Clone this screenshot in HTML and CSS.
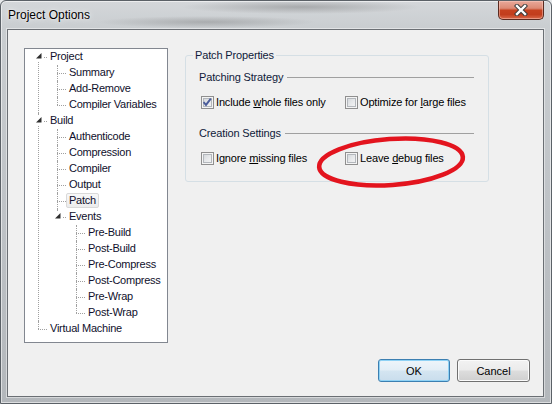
FILE: index.html
```html
<!DOCTYPE html>
<html>
<head>
<meta charset="utf-8">
<title>Project Options</title>
<link rel="stylesheet" href="styles.css">
</head>
<body>
<div class="window">
  <div class="titlebar">
    <span class="title">Project Options</span>
    <button class="close" aria-label="Close"><svg width="14" height="12" viewBox="0 0 14 12"><path d="M3 2 L11 10 M11 2 L3 10" stroke="#3b3b3b" stroke-width="4.4" stroke-linecap="square"/><path d="M3 2 L11 10 M11 2 L3 10" stroke="#ffffff" stroke-width="2.4" stroke-linecap="square"/></svg></button>
  </div>
  <div class="client">
    <div class="main">
      <div class="tree">
        <ul class="lvl0">
          <li class="first">
            <div class="row"><svg class="tw" width="9" height="9" viewBox="0 0 9 9"><rect width="9" height="9" fill="#fff"/><polygon points="7.5,1 7.5,6.5 2,6.5" fill="#2e2e2e"/></svg><span class="lbl">Project</span></div>
            <ul class="lvl1">
              <li><div class="row"><span class="lbl">Summary</span></div></li>
              <li><div class="row"><span class="lbl">Add-Remove</span></div></li>
              <li class="last"><div class="row"><span class="lbl">Compiler Variables</span></div></li>
            </ul>
          </li>
          <li>
            <div class="row"><svg class="tw" width="9" height="9" viewBox="0 0 9 9"><rect width="9" height="9" fill="#fff"/><polygon points="7.5,1 7.5,6.5 2,6.5" fill="#2e2e2e"/></svg><span class="lbl">Build</span></div>
            <ul class="lvl1">
              <li><div class="row"><span class="lbl">Authenticode</span></div></li>
              <li><div class="row"><span class="lbl">Compression</span></div></li>
              <li><div class="row"><span class="lbl">Compiler</span></div></li>
              <li><div class="row"><span class="lbl">Output</span></div></li>
              <li><div class="row"><span class="lbl selected">Patch</span></div></li>
              <li class="last">
                <div class="row"><svg class="tw" width="9" height="9" viewBox="0 0 9 9"><rect width="9" height="9" fill="#fff"/><polygon points="7.5,1 7.5,6.5 2,6.5" fill="#2e2e2e"/></svg><span class="lbl">Events</span></div>
                <ul class="lvl2">
                  <li><div class="row"><span class="lbl">Pre-Build</span></div></li>
                  <li><div class="row"><span class="lbl">Post-Build</span></div></li>
                  <li><div class="row"><span class="lbl">Pre-Compress</span></div></li>
                  <li><div class="row"><span class="lbl">Post-Compress</span></div></li>
                  <li><div class="row"><span class="lbl">Pre-Wrap</span></div></li>
                  <li class="last"><div class="row"><span class="lbl">Post-Wrap</span></div></li>
                </ul>
              </li>
            </ul>
          </li>
          <li class="last"><div class="row"><span class="lbl">Virtual Machine</span></div></li>
        </ul>
      </div>
      <div class="panel">
        <fieldset class="group">
          <legend>Patch Properties</legend>
          <div class="heading">Patching Strategy</div>
          <div class="checks">
            <label class="check"><span class="cb"><svg width="11" height="11" viewBox="0 0 11 11"><path d="M1.6 5.2 L4 7.9 L8.8 1.6" fill="none" stroke="#4a5c9a" stroke-width="1.9"/></svg></span><span class="txt">Include <u>w</u>hole files only</span></label>
            <label class="check"><span class="cb"></span><span class="txt">Optimize for <u>l</u>arge files</span></label>
          </div>
          <div class="heading second">Creation Settings</div>
          <div class="checks">
            <label class="check"><span class="cb"></span><span class="txt">Ignore <u>m</u>issing files</span></label>
            <label class="check"><span class="cb"></span><span class="txt">Leave <u>d</u>ebug files</span></label>
          </div>
        </fieldset>
        <svg class="ring" width="180" height="66" viewBox="0 0 180 66"><ellipse cx="91" cy="32" rx="72" ry="23" fill="none" stroke="#e3141e" stroke-width="4.6" transform="rotate(-4 91 32)"/></svg>
      </div>
    </div>
    <div class="buttons">
      <button class="btn default">OK</button>
      <button class="btn cancel">Cancel</button>
    </div>
  </div>
</div>
</body>
</html>
```

FILE: styles.css
```css
html, body {
  margin: 0;
  padding: 0;
}
body {
  width: 552px;
  height: 404px;
  background: #e6e8ea;
  font-family: "Liberation Sans", Arial, sans-serif;
  font-size: 11px;
  overflow: hidden;
}
.window {
  width: 552px;
  height: 404px;
  box-sizing: border-box;
  border: 1px solid #5b6167;
  border-radius: 6px 6px 0 0;
  padding: 0 7px 6px 6px;
  display: flex;
  flex-direction: column;
  background:
    radial-gradient(ellipse 120px 7px at 300px 6px, rgba(80,80,80,0.32), rgba(80,80,80,0) 100%),
    radial-gradient(ellipse 110px 6px at 205px 21px, rgba(80,80,80,0.28), rgba(80,80,80,0) 100%),
    linear-gradient(180deg, #d4d7da 0px, #c9cdd0 28px, #bfc3c7 200px, #b3b7bb 404px);
  box-shadow: inset 0 0 0 1px rgba(255,255,255,0.55);
}
.titlebar {
  height: 28px;
  display: flex;
  justify-content: space-between;
  align-items: flex-start;
}
.title {
  margin: 7px 0 0 1px;
  font-size: 12px;
  line-height: 15px;
  color: #000;
  text-shadow: 0 0 6px rgba(255,255,255,0.9), 0 0 2px rgba(255,255,255,0.8);
}
.close {
  width: 46px;
  height: 19px;
  margin: 0;
  padding: 0;
  box-sizing: border-box;
  border: 1px solid #5a2a20;
  border-top: none;
  border-radius: 0 0 5px 5px;
  background: linear-gradient(180deg, #e9a99a 0%, #dd8a75 40%, #c6411f 52%, #c23d1d 75%, #d9694a 100%);
  box-shadow: inset 0 0 0 1px rgba(255,210,200,0.45);
  display: flex;
  align-items: center;
  justify-content: center;
}
.client {
  flex: 1;
  border: 1px solid #6b6f74;
  background: #f0f0f0;
  display: flex;
  flex-direction: column;
  padding: 18px 13px 14px 16px;
  box-shadow: 0 0 0 1px rgba(255,255,255,0.45);
}
.main {
  display: flex;
  align-items: flex-start;
}
.tree {
  width: 144px;
  height: 295px;
  box-sizing: border-box;
  border: 1px solid #828790;
  background: #fff;
  color: #10102c;
  letter-spacing: -0.25px;
  overflow: hidden;
}
.tree ul {
  list-style: none;
  margin: 0;
  padding: 0;
}
.tree li {
  position: relative;
}
.tree li::before {
  content: "";
  position: absolute;
  top: 0;
  bottom: 0;
  border-left: 1px dotted #a0a0a0;
}
.tree li.last::before {
  bottom: auto;
  height: 8px;
}
.tree li.first::before {
  top: 8px;
}
.tree li::after {
  content: "";
  position: absolute;
  top: 8px;
  width: 9px;
  border-top: 1px dotted #a0a0a0;
}
.lvl0 > li::before, .lvl0 > li::after { left: 13px; }
.lvl1 > li::before, .lvl1 > li::after { left: 32px; }
.lvl2 > li::before, .lvl2 > li::after { left: 51px; }
.row {
  position: relative;
  z-index: 1;
  height: 16px;
  display: flex;
  align-items: flex-start;
}
.lvl0 > li > .row { padding-left: 22px; }
.lvl1 > li > .row { padding-left: 41px; }
.lvl2 > li > .row { padding-left: 60px; }
.lbl {
  line-height: 13px;
  border: 1px solid transparent;
  padding: 0 2px;
  white-space: nowrap;
}
.lbl.selected {
  background: linear-gradient(180deg, #f8f8f8, #ececec);
  border-color: #d9d9d9;
  border-radius: 2px;
}
.tw {
  position: absolute;
  top: 3px;
}
.lvl0 > li > .row .tw { left: 9px; }
.lvl1 > li > .row .tw { left: 28px; }
.panel {
  position: relative;
  margin-left: 17px;
  width: 304px;
  color: #000;
  letter-spacing: -0.15px;
}
.group {
  margin: 1px 0 0 0;
  padding: 7px 14px 15px 13px;
  border: 1px solid #d5dfe5;
  border-radius: 3px;
  min-width: 0;
}
.group legend {
  padding: 0 2px;
  margin-left: -6px;
  line-height: 13px;
  color: #0f1a3a;
}
.heading {
  display: flex;
  align-items: center;
  gap: 4px;
  line-height: 16px;
  color: #0f1a3a;
}
.heading::after {
  content: "";
  flex: 1;
  height: 1px;
  margin-top: 1px;
  background: #a0a0a0;
}
.heading.second {
  margin-top: 15px;
}
.checks {
  display: grid;
  grid-template-columns: 144px auto;
  margin-top: 9px;
  padding-left: 2px;
}
.check {
  display: flex;
  align-items: center;
  gap: 2px;
  line-height: 16px;
  white-space: nowrap;
}
.check u {
  text-decoration: underline;
  text-underline-offset: 1px;
}
.cb {
  width: 13px;
  height: 13px;
  box-sizing: border-box;
  border: 1px solid #8f8f8f;
  background: linear-gradient(135deg, #cdd1d6 0%, #e6e8ea 50%, #f8f8f8 100%);
  box-shadow: inset 0 0 0 1px #f4f4f4, inset 0 0 0 2px #b3b7bc;
  display: flex;
  align-items: center;
  justify-content: center;
  flex: none;
}
.cb svg {
  display: block;
}
.ring {
  position: absolute;
  left: 115px;
  top: 82px;
}
.buttons {
  margin-top: 16px;
  display: flex;
  justify-content: flex-end;
  gap: 7px;
}
.btn {
  height: 23px;
  box-sizing: border-box;
  margin: 0;
  padding: 0;
  border: 1px solid #707070;
  border-radius: 3px;
  background: linear-gradient(180deg, #f2f2f2 0%, #ebebeb 48%, #dddddd 52%, #cfcfcf 100%);
  box-shadow: inset 0 0 0 1px #fbfbfb;
  font-family: "Liberation Sans", Arial, sans-serif;
  font-size: 11px;
  color: #000;
}
.btn.default {
  width: 72px;
  border-color: #3c7fb1;
  background: linear-gradient(180deg, #eef5fa 0%, #e3eef6 48%, #d4e5f1 52%, #c9ddec 100%);
  box-shadow: inset 0 0 0 1px #8fd2f5;
}
.btn.cancel {
  width: 73px;
}
```
